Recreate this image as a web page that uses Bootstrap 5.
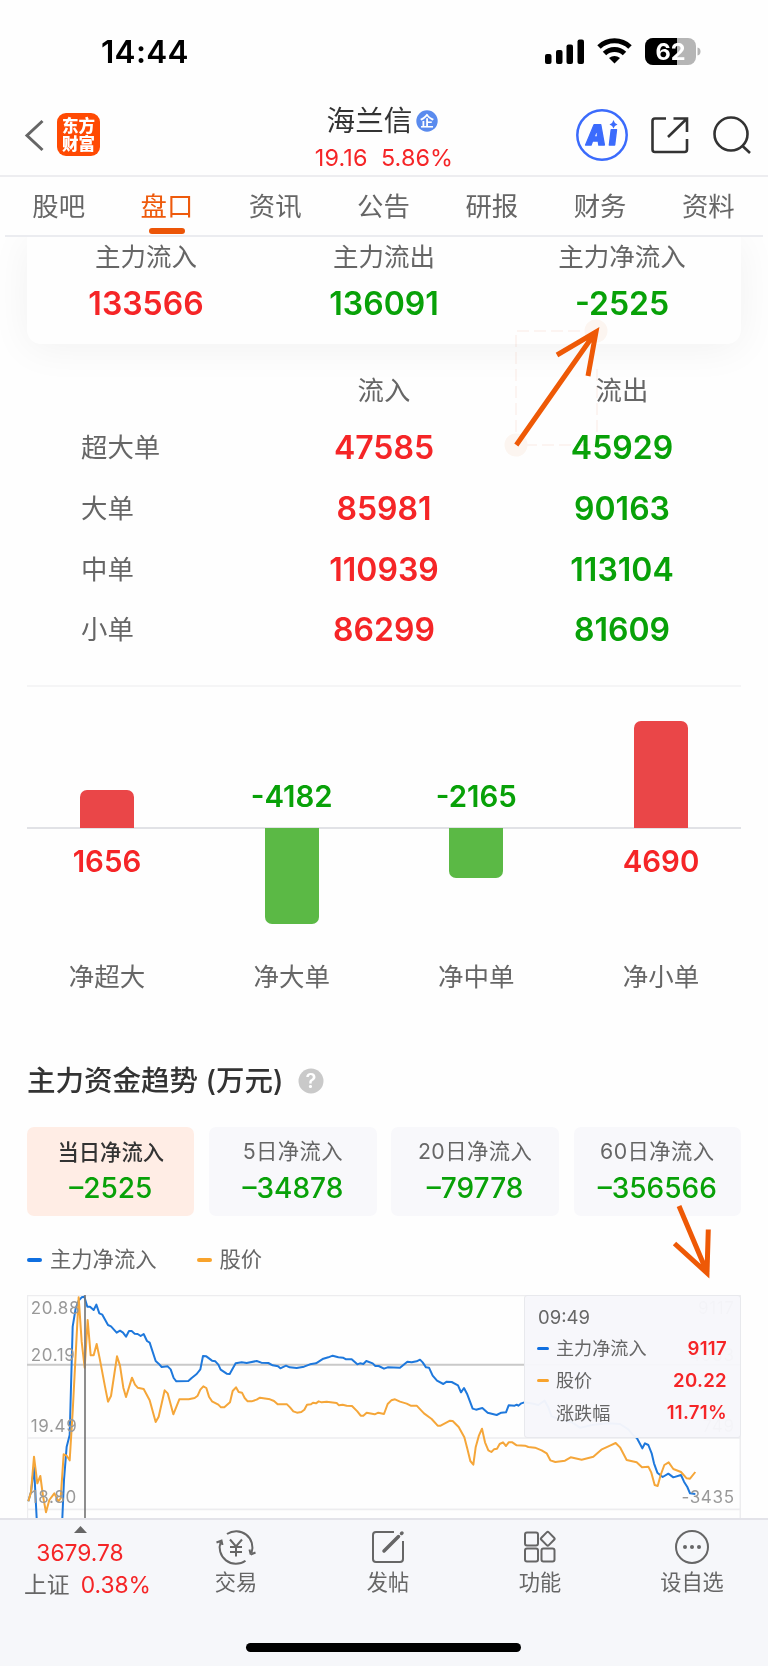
<!DOCTYPE html>
<html lang="zh-CN">
<head>
<meta charset="utf-8">
<meta name="viewport" content="width=device-width, initial-scale=1">
<title>海兰信 盘口</title>
<link rel="stylesheet" href="https://cdn.jsdelivr.net/npm/bootstrap@5.3.0/dist/css/bootstrap.min.css">
<style>
body{font-family:Inter,"Noto Sans CJK SC",sans-serif;background:#fefefe;color:#666;line-height:1;height:1666px;overflow:hidden}
.up{color:#f52527!important}.down{color:#08a108!important}
svg{display:block;flex:none}
.statusbar{height:85px;padding:19px 67px 0 101px;color:#000}
.clock{font-size:31.5px;font-weight:600;letter-spacing:.3px}
.topbar{height:92px;padding-top:9px;border-bottom:2px solid #ededf0}
.side{width:270px}
.logo{width:43px;height:43px;border-radius:9px;background:#ff4a03;color:#fff;font-size:16.5px;font-weight:900;line-height:18px;margin-left:13px}
.stock{font-size:28.6px;color:#333;margin-top:7px;margin-left:-3px}
.quote{font-size:23.4px;margin-top:10px;letter-spacing:.1px}
.tabs{height:60px;margin:0 5px;border-bottom:2px solid #ebecf0;font-size:26.4px}
.tabs a{width:108.4px;color:#666;text-decoration:none;position:relative;white-space:nowrap;padding-right:1px}
.tabs a.on{color:#ee5a0c}
.tabs a.on::after{content:"";position:absolute;left:50%;margin-left:-18px;bottom:1px;width:36px;height:6px;border-radius:3px;background:#ec5507}
.clipper{height:154px;overflow:hidden;margin-bottom:-47px}
.summary{height:107px;margin:0 27px;background:#fefefe;border-radius:0 0 14px 14px;box-shadow:0 4px 42px rgba(0,0,0,.055)}
.c3{width:238px}
.lbl{font-size:25.5px;white-space:nowrap}
.summary .lbl{padding-top:7px}
.summary .num{margin-top:18px}
.num{font-size:32px;font-weight:600;white-space:nowrap}
.orders{padding:0 27px}
.orders .lbl{font-size:26.4px;position:relative;top:-1px}
.orders .line{height:60.7px}
.orders .line .c3:first-child{padding-left:54px}
.netchart{height:314px;border-top:2px solid #f5f5f6;margin:0 27px}
.netcols{margin:0 -12.4px}
.netcols>div{width:184.7px}
.upper{height:140.500px}
.lower{height:110px}
.axis{height:2px;background:#e1e2e6}
.stick{width:54px}
.stick.r{background:#ea4648;border-radius:7px 7px 0 0;margin-bottom:-1px}
.stick.g{background:#5bb945;border-radius:0 0 7px 7px;margin-top:-1px}
.netnum{font-size:29.4px;font-weight:600}
.head{font-size:28.5px;font-weight:500;color:#333;height:34px;padding-left:27px}
.periods{padding:0 27px;gap:14.7px}
.period{flex:1;height:89px;border-radius:7px;background:#f8f8fb;font-size:21.3px;white-space:nowrap;padding-top:14px}
.period .t{letter-spacing:.45px}
.period.on{background:#ffede5}
.period.on .t{color:#333;font-weight:500;position:relative;top:1px;letter-spacing:0}
.period .v{font-size:28px;font-weight:500;margin-top:12px}
.legend{font-size:21.3px;height:30px}
.dash{width:15px;height:4px;border-radius:2px;background:#0f6fe0}
.dash.o{background:#f8a32c}
.plot{position:relative;margin:20px 27px 0;height:224px}
.tip{position:absolute;right:0;top:0;width:217px;height:143px;background:rgba(247,247,251,.965);border:1.5px solid #e8e9ed;border-radius:3px;font-size:18.1px;padding:12px 13px 0 12px}
.tip .rowx{height:32.2px}
.tip b{font-weight:600;font-size:18.6px;letter-spacing:.3px}
.dock{height:148px;background:#f6f7fa;border-top:2px solid #e3e3e9;position:relative;font-size:21.2px}
.dock .item{width:152px;padding-top:10px}
.dock .item span{margin-top:8px}
.index{width:160px;font-size:22.8px}
.home{width:275px;height:9px;border-radius:5px;background:#000;position:absolute;left:246px;top:123px}
.notes{position:absolute;left:0;top:0;pointer-events:none}
.soft{mix-blend-mode:multiply}
</style>
</head>
<body>
<header>
 <div class="statusbar d-flex align-items-center justify-content-between">
  <span class="clock">14:44</span>
  <svg width="157" height="30" viewBox="0 0 157 30">
   <rect x="1" y="17" width="6.5" height="10" rx="2"/><rect x="12" y="13" width="6.5" height="14" rx="2"/><rect x="22.500" y="7.500" width="6.5" height="19.500" rx="2"/><rect x="33.500" y="2.500" width="6.5" height="24.500" rx="2"/>
   <g fill="none" stroke="#000" stroke-width="5"><path d="M55 10A22.500 22.500 0 0 1 86 10"/><path d="M60.500 16.500A14.500 14.500 0 0 1 80.500 16.500"/></g>
   <path d="M70.500 26.500L65 21Q70.500 17 76 21Z"/>
   <defs><clipPath id="bat"><rect x="101" y="1" width="51" height="27" rx="8"/></clipPath></defs>
   <g clip-path="url(#bat)"><rect x="101" y="1" width="51" height="27" fill="#b5b5b5"/><rect x="101" y="1" width="32" height="27"/></g>
   <path d="M153.500 10.500Q156.500 11 156.500 14.500T153.500 18.500Z" fill="#b5b5b5"/>
   <text x="126.500" y="23" text-anchor="middle" fill="#fff" font-size="23.500" font-weight="700">62</text>
  </svg>
 </div>
 <div class="topbar d-flex align-items-center">
  <div class="side d-flex align-items-center ps-4">
   <svg width="20" height="34" viewBox="0 0 20 34" fill="none" stroke="#666" stroke-width="3"><path d="M18.500 3L3 17.500L18.500 32"/></svg>
   <div class="logo d-flex flex-column align-items-center justify-content-center"><span>东方</span><span>财富</span></div>
  </div>
  <div class="flex-fill d-flex flex-column align-items-center">
   <div class="stock d-flex align-items-center">海兰信
    <svg style="margin-left:4px" width="22" height="22" viewBox="0 0 22 22"><circle cx="11" cy="11" r="10.700" fill="#5a8bee"/><text x="11" y="16" text-anchor="middle" font-size="14" font-weight="700" fill="#fff">企</text></svg>
   </div>
   <div class="quote up">19.16&nbsp; 5.86%</div>
  </div>
  <div class="side d-flex align-items-center justify-content-end">
   <svg width="193" height="54" viewBox="0 0 193 54" fill="none" stroke="#333" stroke-width="2.600">
    <circle cx="27" cy="27" r="24.700" stroke="#3b6bfc" stroke-width="2.500"/>
    <g fill="#3b6bfc" stroke="#3b6bfc" stroke-width="1.400" stroke-linejoin="round" font-size="28" font-weight="900" transform="translate(0 36.500) skewX(-7)"><text x="10" y="0" textLength="20" lengthAdjust="spacingAndGlyphs">A</text><text x="33" y="0" textLength="8" lengthAdjust="spacingAndGlyphs">ı</text></g>
    <path d="M38.500 12Q39.300 15.500 42.500 16.500Q39.300 17.500 38.500 20.500Q37.700 17.500 34.500 16.500Q37.700 15.500 38.500 12Z" fill="#3b6bfc" stroke="none"/>
    <path d="M91 10.500H80Q77.500 10.500 77.500 13V41.500Q77.500 44 80 44H109.500Q112 44 112 41.500V31M98.500 10.500H112V24M112 10.500L93 29"/>
    <circle cx="156" cy="26" r="16.500"/><path d="M167 37.500L175 45"/>
   </svg>
  </div>
 </div>
 <nav class="tabs d-flex">
  <a class="d-flex align-items-center justify-content-center" href="#">股吧</a>
  <a class="on d-flex align-items-center justify-content-center" href="#">盘口</a>
  <a class="d-flex align-items-center justify-content-center" href="#">资讯</a>
  <a class="d-flex align-items-center justify-content-center" href="#">公告</a>
  <a class="d-flex align-items-center justify-content-center" href="#">研报</a>
  <a class="d-flex align-items-center justify-content-center" href="#">财务</a>
  <a class="d-flex align-items-center justify-content-center" href="#">资料</a>
 </nav>
</header>
<main>
 <section class="clipper">
  <div class="summary d-flex text-center">
   <div class="c3"><div class="lbl">主力流入</div><div class="num up">133566</div></div>
   <div class="c3"><div class="lbl">主力流出</div><div class="num down">136091</div></div>
   <div class="c3"><div class="lbl">主力净流入</div><div class="num down">-2525</div></div>
  </div>
 </section>
 <section class="orders" id="orders">
  <div class="line d-flex align-items-center text-center" style="height:74px;padding-top:20px"><div class="c3"></div><div class="c3 lbl">流入</div><div class="c3 lbl">流出</div></div>
  <div class="line d-flex align-items-center text-center"><div class="c3 lbl text-start">超大单</div><div class="c3 num up">47585</div><div class="c3 num down">45929</div></div>
  <div class="line d-flex align-items-center text-center"><div class="c3 lbl text-start">大单</div><div class="c3 num up">85981</div><div class="c3 num down">90163</div></div>
  <div class="line d-flex align-items-center text-center"><div class="c3 lbl text-start">中单</div><div class="c3 num up">110939</div><div class="c3 num down">113104</div></div>
  <div class="line d-flex align-items-center text-center"><div class="c3 lbl text-start">小单</div><div class="c3 num up">86299</div><div class="c3 num down">81609</div></div>
 </section>
 <section class="netchart" style="margin-top:24px">
  <div class="netcols upper d-flex align-items-end">
   <div class="d-flex justify-content-center"><div class="stick r" style="height:38px"></div></div>
   <div class="netnum down text-center" style="padding-bottom:16px">-4182</div>
   <div class="netnum down text-center" style="padding-bottom:16px">-2165</div>
   <div class="d-flex justify-content-center"><div class="stick r" style="height:107px"></div></div>
  </div>
  <div class="axis"></div>
  <div class="netcols lower d-flex">
   <div class="netnum up text-center" style="padding-top:18px">1656</div>
   <div class="d-flex justify-content-center"><div class="stick g" style="height:96px"></div></div>
   <div class="d-flex justify-content-center"><div class="stick g" style="height:50px"></div></div>
   <div class="netnum up text-center" style="padding-top:18px">4690</div>
  </div>
  <div class="netcols d-flex text-center lbl" style="padding-top:25px"><div>净超大</div><div>净大单</div><div>净中单</div><div>净小单</div></div>
 </section>
 <section style="margin-top:65px">
  <div class="head d-flex align-items-center">主力资金趋势&nbsp;(万元)
   <svg style="margin-left:14px" width="26" height="26" viewBox="0 0 26 26"><circle cx="13" cy="13" r="12.500" fill="#c9c9c9"/><text x="13" y="20" text-anchor="middle" font-size="20" font-weight="600" fill="#fff">?</text></svg>
  </div>
  <div class="periods d-flex text-center" style="margin-top:29px">
   <div class="period on"><div class="t">当日净流入</div><div class="v down">–2525</div></div>
   <div class="period"><div class="t">5日净流入</div><div class="v down">–34878</div></div>
   <div class="period"><div class="t">20日净流入</div><div class="v down">–79778</div></div>
   <div class="period"><div class="t">60日净流入</div><div class="v down">–356566</div></div>
  </div>
  <div class="legend d-flex align-items-center" style="margin:29px 0 0 27px"><span class="dash me-2"></span>主力净流入<span class="dash o me-2" style="margin-left:40px"></span>股价</div>
  <div class="plot">
   <svg width="714" height="224" viewBox="81 45 2142 672" fill="none">
    <path d="M81 46H2222M81 474H2222M81 688H2222M82 45V717M2221 45V717" stroke="#ededef" stroke-width="5"/>
    <path d="M81 254H2222" stroke="#c9c9c9" stroke-width="6"/>
    <g stroke-width="6" stroke-linejoin="round">
    <path stroke="#1e78dc" d="M85 664L93 636L102 560L110 714M187 714L192 600L200 500L209 465L218 140L227 85L236 62L245 52L253 50L262 80H270L281 90L289 74L298 100L307 104L324 135L333 139L350 158L360 152L369 158L378 170L387 153H395L404 161L413 162L422 168L431 162L441 183L449 188L467 243L476 251L485 261L503 259L512 268L521 294L529 304L565 303L575 294L590 282L601 268L609 228L619 229L636 242L646 244L655 254L662 269L680 281L689 282L707 250L725 247L740 249L770 243L784 248L805 249L818 256L834 259L841 265L858 257L869 262L890 264L912 260L930 253L948 250L970 236L985 232L998 227L1015 232L1029 233L1038 238L1055 238L1072 253L1080 250L1090 252L1099 243L1118 250L1126 258L1136 258L1152 266L1163 262L1200 263L1222 245L1235 247L1250 244L1260 239L1268 247L1278 262L1287 263L1298 287L1311 302L1330 312L1340 305L1355 306L1374 316L1383 337L1392 324L1401 341L1418 386L1428 389L1447 384L1463 398L1490 405L1504 398L1518 397L1526 376L1544 377L1550 374L1555 377L1564 370L1573 367L1600 371L1615 375L1634 362L1645 382L1655 409L1682 419L1714 426L1740 443L1780 434L1825 430L1860 432L1885 448L1900 466L1911 475L1927 505L1935 490L1945 495L1955 520L1962 550L1972 578L1988 591L2005 581L2020 592L2043 585L2052 605L2062 621L2070 640L2086 642"/>
    <path stroke="#f5a639" d="M85 664L93 636L102 530L112 610L121 588L129 648L138 697L148 660L163 640L175 664L182 655L191 523L200 527L209 541L218 395L236 52L245 185L254 263L263 120L272 226H281L290 192L299 235L315 320L324 365L333 348L351 229L360 257L370 323L378 351L396 293L405 314L413 323L431 327L449 361L467 426L476 410L494 331L503 340L520 403L538 358H566L584 354L593 347L601 329L610 319L619 324L627 350L636 364L655 374L663 382H673L690 367L698 333L708 322L716 336L726 338L734 354L743 364H755L770 359L780 353L810 358L822 363L833 373H861L870 382L880 394L891 398L904 396L913 389L921 374L933 373L939 368L948 370L956 364L965 367L980 365L1010 369L1017 376L1028 374L1040 377L1056 378L1072 394L1082 407H1090L1100 398L1124 403L1135 398L1152 402L1163 372L1174 361L1185 358L1200 365L1220 371L1232 377H1250L1272 400L1295 417L1313 437H1322L1350 422L1358 423L1376 441L1393 472L1402 506L1411 543L1420 554L1427 502L1437 466L1446 446L1455 487L1465 511L1474 516L1482 508L1491 506L1499 492L1509 487L1518 498L1526 487H1537L1550 496L1575 497L1585 501L1605 503L1625 511L1640 520L1651 541L1666 546L1695 542L1712 532L1745 539L1780 530L1804 509L1830 497L1847 489L1860 502L1880 540L1910 547L1926 562L1945 560L1954 578L1964 615L1973 618L1982 585L1993 555L2006 547L2020 567L2043 576L2060 595L2070 596L2086 576"/>
    </g>
    <path d="M255 45V714" stroke="#777" stroke-width="5"/>
    <g fill="#999" font-size="51" letter-spacing="2"><text x="92" y="102">20.88</text><text x="92" y="242">20.19</text><text x="92" y="456">19.49</text><text x="92" y="670">18.80</text><text x="2204" y="670" text-anchor="end">-3435</text>
    <text x="2204" y="102" text-anchor="end">9117</text><text x="2204" y="242" text-anchor="end">4933</text><text x="2204" y="456" text-anchor="end">749</text></g>
   </svg>
   <div class="tip">
    <div style="margin-bottom:6px;margin-left:1px;font-size:18.5px">09:49</div>
    <div class="rowx d-flex align-items-center"><span class="dash" style="width:12px;height:3px;margin-right:7px"></span>主力净流入<b class="ms-auto up">9117</b></div>
    <div class="rowx d-flex align-items-center"><span class="dash o" style="width:12px;height:3px;margin-right:7px"></span>股价<b class="ms-auto up">20.22</b></div>
    <div class="rowx d-flex align-items-center"><span style="width:19px"></span>涨跌幅<b class="ms-auto up">11.71%</b></div>
   </div>
  </div>
 </section>
</main>
<footer class="dock d-flex" style="margin-top:-1px">
 <div class="index d-flex flex-column align-items-center">
  <svg style="margin-top:6px" width="13" height="7" viewBox="0 0 13 7"><path d="M0 7L6.500 0L13 7Z" fill="#666"/></svg>
  <span class="up" style="margin-top:9px">3679.78</span>
  <span class="d-flex text-nowrap" style="margin:9px 0 0 15px">上证<span class="up" style="margin-left:11px">0.38%</span></span>
 </div>
 <div class="item d-flex flex-column align-items-center">
  <svg width="40" height="35" viewBox="0 0 40 35" fill="none" stroke="#666" stroke-width="2"><path d="M11 4A16.300 16.300 0 0 1 35.500 23M34.700 24.500L39.500 22.500M34.700 24.500L33.500 19.500M29.500 30.700A16.300 16.300 0 0 1 4.800 11.500M.5 12.500L5.500 10.500L6.500 15M14 9.500L20 16.500L26 9.500M20 16.500V26.500M14 17H26M14 22H26"/></svg><span style="margin-top:7px">交易</span>
 </div>
 <div class="item d-flex flex-column align-items-center">
  <svg width="34" height="34" viewBox="0 0 34 34" fill="none" stroke="#666" stroke-width="2"><path d="M23 2H5Q2 2 2 5V29Q2 32 5 32H29Q32 32 32 29V11"/><path d="M13 21L27.500 6.500M30.500 3.500L31 3" stroke-width="3.500" stroke-linecap="round"/></svg><span>发帖</span>
 </div>
 <div class="item d-flex flex-column align-items-center">
  <svg width="34" height="34" viewBox="0 0 34 34" fill="none" stroke="#666" stroke-width="2"><rect x="2" y="2.500" width="13" height="13" rx="2"/><rect x="2" y="18.500" width="13" height="13" rx="2"/><rect x="18.500" y="18.500" width="13" height="13" rx="2"/><rect x="19.500" y="3.500" width="10.500" height="10.500" rx="1.500" transform="rotate(45 24.750 8.750)"/></svg><span>功能</span>
 </div>
 <div class="item d-flex flex-column align-items-center">
  <svg width="34" height="34" viewBox="0 0 34 34" fill="none" stroke="#666" stroke-width="2"><circle cx="17" cy="17" r="16"/><g fill="#666" stroke="none"><circle cx="10" cy="17" r="2"/><circle cx="17" cy="17" r="2"/><circle cx="24" cy="17" r="2"/></g></svg><span>设自选</span>
 </div>
 <div class="home"></div>
</footer>
<svg class="notes soft" width="768" height="1666" viewBox="0 0 768 1666" fill="none">
 <g fill="#fdf6f1"><circle cx="516" cy="445" r="11.500"/><circle cx="596" cy="331" r="11.500"/></g>
 <path d="M597 331H516V445H597V365" stroke="#fdf5f2" stroke-width="2" stroke-dasharray="12 5"/>
</svg>
<svg class="notes" width="768" height="1666" viewBox="0 0 768 1666" fill="none" stroke="#ee5906" stroke-width="5">
 <path d="M516.300 445L595.700 332M557 355L596 332L588 376"/>
 <path d="M679 1206L707.300 1273M674.500 1243.500L707 1273L708.300 1229.500"/>
</svg>
<script src="https://cdn.jsdelivr.net/npm/bootstrap@5.3.0/dist/js/bootstrap.bundle.min.js"></script>
</body>
</html>
